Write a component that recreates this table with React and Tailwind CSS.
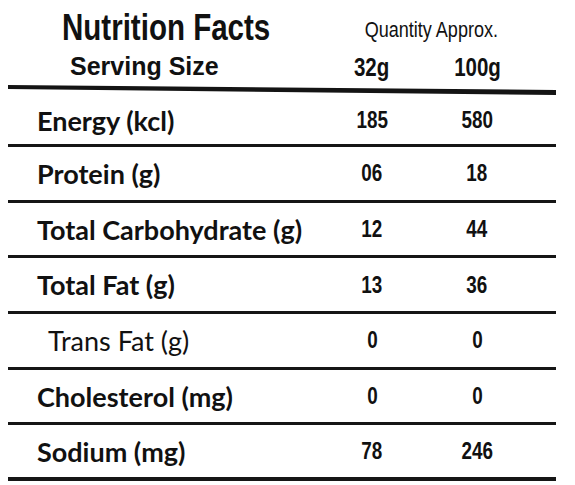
const arial = "font-['Liberation_Sans','Arial',sans-serif]";
const label = "font-['Lato','Open_Sans',sans-serif]";

const rows = [
  { name: 'Energy (kcl)', a: '185', b: '580', h: 'h-[51px]' },
  { name: 'Protein (g)', a: '06', b: '18' },
  { name: 'Total Carbohydrate (g)', a: '12', b: '44' },
  { name: 'Total Fat (g)', a: '13', b: '36' },
  { name: 'Trans Fat (g)', a: '0', b: '0', sub: true },
  { name: 'Cholesterol (mg)', a: '0', b: '0' },
  { name: 'Sodium (mg)', a: '78', b: '246', last: true },
];

// condensed look: Arial squeezed horizontally
function Narrow({ children, className = '' }) {
  return <span className={`inline-block whitespace-nowrap scale-x-[0.82] ${arial} ${className}`}>{children}</span>;
}

export default function App() {
  return (
    <div className="w-[575px] h-[485px] bg-white text-[#111] overflow-hidden">
      {/* header */}
      <div className="flex h-[48px]">
        <div className="w-[341px] pl-[62px] pt-[9px] text-[36px] leading-none font-bold">
          <Narrow className="origin-left">Nutrition Facts</Narrow>
        </div>
        <div className="w-[180px] pt-[17px] text-center text-[22px] leading-none">
          <Narrow>Quantity Approx.</Narrow>
        </div>
      </div>
      <div className="flex h-[36px]">
        <div className={`w-[320px] pl-[70px] pt-[6px] text-[25px] leading-none font-bold ${arial}`}>
          Serving Size
        </div>
        <div className="w-[104px] pt-[6px] text-center text-[25px] leading-none font-bold">
          <Narrow>32g</Narrow>
        </div>
        <div className="w-[106px] pt-[6px] text-center text-[25px] leading-none font-bold">
          <Narrow>100g</Narrow>
        </div>
      </div>

      <svg width="575" height="12" className="block">
        <polygon points="8,1 556,6 556,11 8,5" fill="#141414" />
      </svg>

      <div className="ml-[8px] w-[548px]">
        {rows.map(r => (
          <div
            key={r.name}
            className={`flex items-center ${r.h || 'h-[55.7px]'} ${r.last ? 'border-b-4' : 'border-b-[3px]'} border-[#161616]`}
          >
            <div
              className={`w-[312px] whitespace-nowrap text-[27px] leading-none ${label} ${r.sub ? 'pl-[40px] font-normal' : 'pl-[29px] font-bold'}`}
            >
              {r.name}
            </div>
            <div className="w-[104px] text-center text-[23px] leading-none font-bold">
              <Narrow>{r.a}</Narrow>
            </div>
            <div className="w-[106px] text-center text-[23px] leading-none font-bold">
              <Narrow>{r.b}</Narrow>
            </div>
          </div>
        ))}
      </div>
    </div>
  );
}
